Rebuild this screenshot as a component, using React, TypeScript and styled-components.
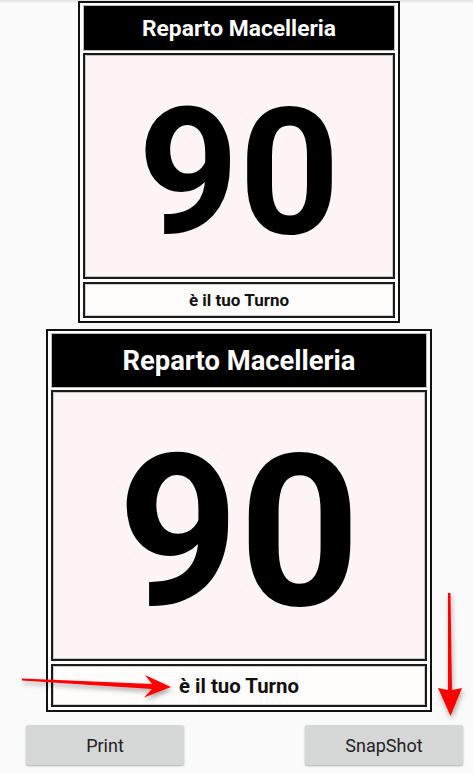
import styled, { createGlobalStyle } from 'styled-components';

const GlobalStyle = createGlobalStyle`
    html, body {
        margin: 0;
        padding: 0;
    }
    body {
        background: linear-gradient(#e2e2e2, #fafafa 4px) #fafafa;
        font-family: Roboto, 'Noto Sans', sans-serif;
        width: 473px;
        height: 773px;
        overflow: hidden;
    }
`;

type CardProps = { scale: number };

const TicketCard = ({ scale }: CardProps) => (
    <FakeCard $s={scale}>
        <FakeHeader $s={scale}>Reparto Macelleria</FakeHeader>
        <FakeNumberBox $s={scale}>90</FakeNumberBox>
        <FakeFooter $s={scale}>è il tuo Turno</FakeFooter>
    </FakeCard>
);

export default function App() {
    return (
        <>
            <GlobalStyle />
            <FakeScreen>
                {/* Small and big ticket previews */}
                <FakeCardsColumn>
                    <TicketCard scale={1} />
                    <TicketCard scale={1.2} />
                </FakeCardsColumn>

                {/* Actions */}
                <FakeButtonsRow>
                    <FakeButton>Print</FakeButton>
                    <FakeButton>SnapShot</FakeButton>
                </FakeButtonsRow>

                {/* Red annotation arrows drawn over the screenshot */}
                <FakeArrows width="473" height="773" viewBox="0 0 473 773">
                    <defs>
                        <filter id="arrowShadow" x="-20%" y="-20%" width="140%" height="140%">
                            <feDropShadow dx="1" dy="3" stdDeviation="2.5" floodColor="#000" floodOpacity="0.35" />
                        </filter>
                    </defs>
                    <g filter="url(#arrowShadow)" fill="#ff0000">
                        <polygon points="22,678.5 152,684 145,675 171,687 144,697.5 152,689 22,680.5" />
                        <polygon points="448,593 450.5,593 452,690 462,688 450.5,716 438,688 448,690" />
                    </g>
                </FakeArrows>
            </FakeScreen>
        </>
    );
}

const FakeScreen = styled.div`
    position: relative;
    width: 473px;
    height: 773px;
    display: flex;
    flex-direction: column;
`;

const FakeCardsColumn = styled.div`
    display: flex;
    flex-direction: column;
    align-items: center;
    gap: 6px;
    padding: 1px 0 0 5px;
`;

const FakeCard = styled.div<{ $s: number }>`
    width: ${(p) => Math.round(322 * p.$s)}px;
    box-sizing: border-box;
    border: 2px solid #111;
    background: #fff;
    padding: 3px;
    display: flex;
    flex-direction: column;
    gap: 3px;
`;

const FakeHeader = styled.div<{ $s: number }>`
    height: ${(p) => Math.round(44 * p.$s)}px;
    margin: 0 1px;
    background: #000;
    box-shadow: 0 0 0 1px #bdbdbd;
    color: #fff;
    font-weight: 700;
    font-size: ${(p) => 22.8 * p.$s}px;
    display: flex;
    align-items: center;
    justify-content: center;
`;

const FakeNumberBox = styled.div<{ $s: number }>`
    height: ${(p) => Math.round(226 * p.$s)}px;
    box-sizing: border-box;
    border: 2px solid #1a1a1a;
    box-shadow: inset 0 0 0 1px #c8c4c4;
    background: #fdf5f5;
    color: #000;
    font-weight: 700;
    font-size: ${(p) => 176 * p.$s}px;
    line-height: 1;
    display: flex;
    align-items: center;
    justify-content: center;
    padding-top: ${(p) => 14 * p.$s}px;
`;

const FakeFooter = styled.div<{ $s: number }>`
    height: ${(p) => Math.round(36 * p.$s)}px;
    box-sizing: border-box;
    border: 2px solid #1a1a1a;
    box-shadow: inset 0 0 0 1px #cfcfcf;
    background: #fffdfb;
    color: #111;
    font-weight: 700;
    font-size: ${(p) => 17 * p.$s}px;
    display: flex;
    align-items: center;
    justify-content: center;
`;

const FakeButtonsRow = styled.div`
    display: flex;
    justify-content: space-between;
    padding: 13px 10px 0 26px;
`;

const FakeButton = styled.button`
    width: 158px;
    height: 40px;
    border: none;
    border-radius: 2px;
    background: #d6d7d7;
    box-shadow: 0 1px 2px rgba(0, 0, 0, 0.3);
    color: #222;
    font-family: Roboto, 'Noto Sans', sans-serif;
    font-size: 18px;
    padding: 0;
`;

const FakeArrows = styled.svg`
    position: absolute;
    top: 0;
    left: 0;
    pointer-events: none;
`;
